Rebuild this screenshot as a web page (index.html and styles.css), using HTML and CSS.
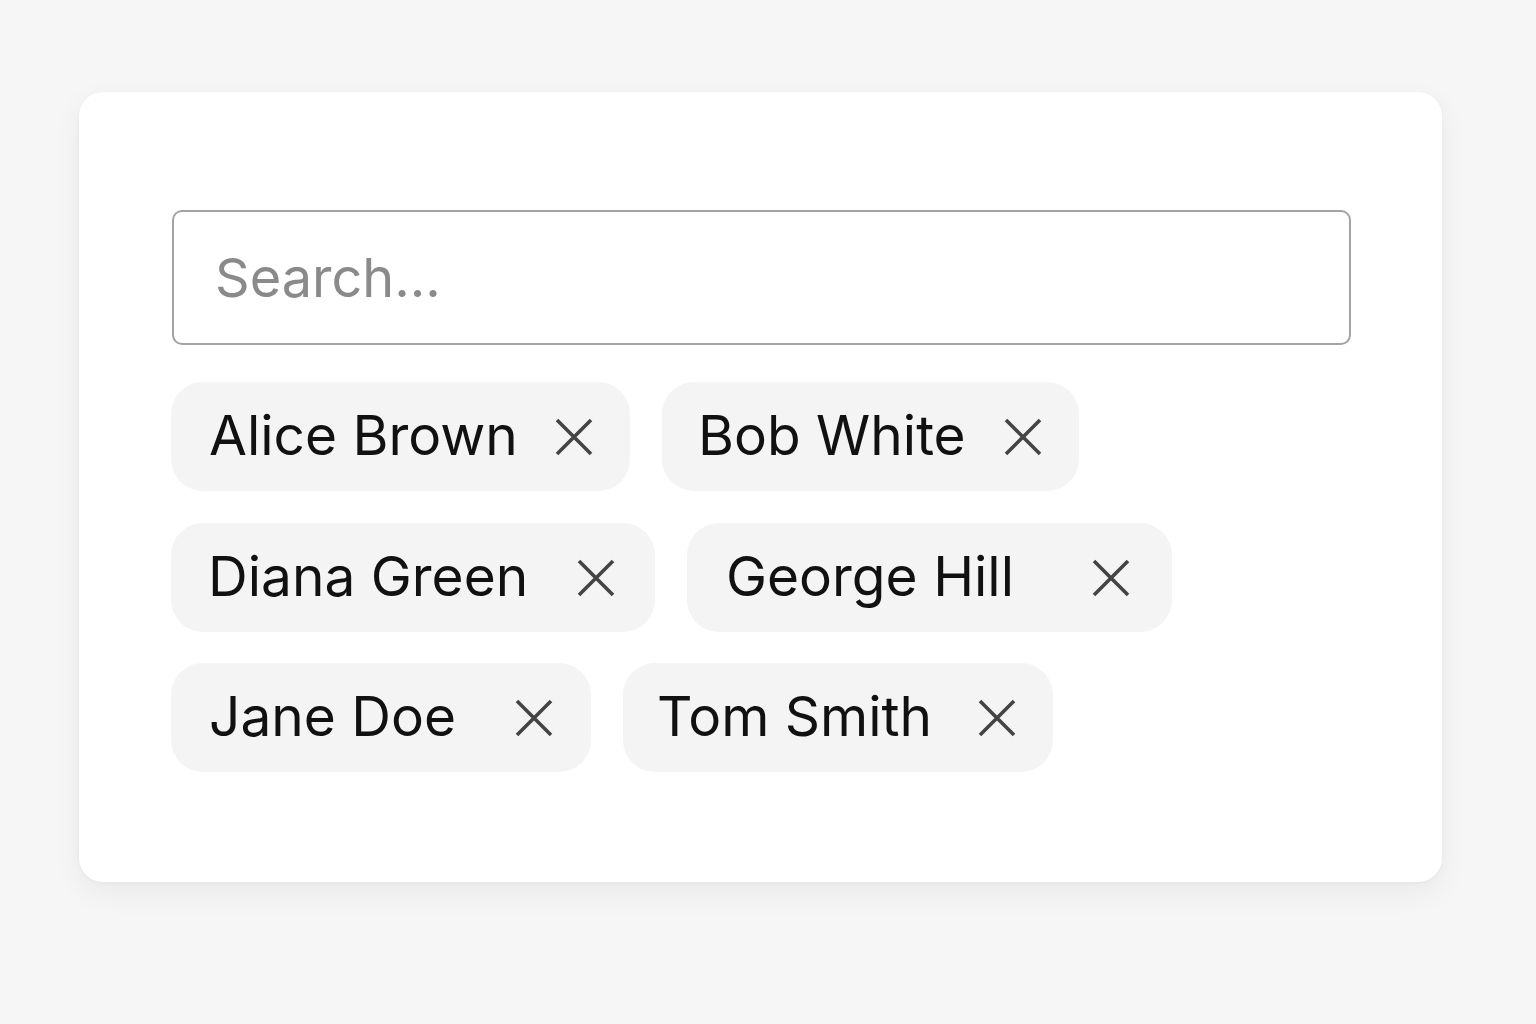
FILE: index.html
```html
<!DOCTYPE html>
<html lang="en">
<head>
<meta charset="utf-8">
<title>Tag search</title>
<link rel="stylesheet" href="styles.css">
</head>
<body>
<main class="card">
  <div class="search">
    <input class="search-input" type="text" placeholder="Search...">
  </div>
  <ul class="chips">
    <li class="chip chip--alice"><span class="chip-label">Alice Brown</span><svg class="chip-x" viewBox="0 0 38 38"><path d="M2 2L36 36M36 2L2 36"/></svg></li>
    <li class="chip chip--bob"><span class="chip-label">Bob White</span><svg class="chip-x" viewBox="0 0 38 38"><path d="M2 2L36 36M36 2L2 36"/></svg></li>
    <li class="chip chip--diana"><span class="chip-label">Diana Green</span><svg class="chip-x" viewBox="0 0 38 38"><path d="M2 2L36 36M36 2L2 36"/></svg></li>
    <li class="chip chip--george"><span class="chip-label">George Hill</span><svg class="chip-x" viewBox="0 0 38 38"><path d="M2 2L36 36M36 2L2 36"/></svg></li>
    <li class="chip chip--jane"><span class="chip-label">Jane Doe</span><svg class="chip-x" viewBox="0 0 38 38"><path d="M2 2L36 36M36 2L2 36"/></svg></li>
    <li class="chip chip--tom"><span class="chip-label">Tom Smith</span><svg class="chip-x" viewBox="0 0 38 38"><path d="M2 2L36 36M36 2L2 36"/></svg></li>
  </ul>
</main>
</body>
</html>
```
FILE: styles.css
```css
html, body {
  margin: 0;
  padding: 0;
}
body {
  background: #f6f6f6;
  font-family: Inter, "Noto Sans", sans-serif;
  width: 1536px;
  height: 1024px;
  padding-top: 92px;
  box-sizing: border-box;
}
.card {
  margin-left: 79px;
  width: 1363px;
  height: 790px;
  box-sizing: border-box;
  background: #ffffff;
  border-radius: 24px;
  box-shadow: 0 10px 30px rgba(0, 0, 0, 0.06), 0 1px 4px rgba(0, 0, 0, 0.03);
  padding: 118px 91px 0 93px;
}
.search-input {
  display: block;
  width: 1179px;
  height: 135px;
  box-sizing: border-box;
  border: 2px solid #a3a3a3;
  border-radius: 10px;
  padding: 0 0 0 41px;
  font-family: Inter, "Noto Sans", sans-serif;
  font-size: 54px;
  color: #111;
  background: #fff;
  outline: none;
}
.search-input::placeholder {
  color: #8a8a8a;
}
.chips {
  list-style: none;
  margin: 37px 0 0 -1px;
  padding: 0;
  display: flex;
  flex-wrap: wrap;
  column-gap: 32px;
  row-gap: 32px;
  width: 1180px;
}
.chip {
  height: 109px;
  box-sizing: border-box;
  background: #f4f4f4;
  border-radius: 32px;
  display: flex;
  align-items: center;
  justify-content: space-between;
  padding: 0 37px 0 38px;
  font-size: 55px;
  color: #111;
}
.chip-label {
  line-height: 1;
  padding-bottom: 2px;
}
.chip-x {
  width: 38px;
  height: 38px;
  flex: none;
  stroke: #444;
  stroke-width: 3.6;
  fill: none;
}
.chip--alice { width: 459px; }
.chip--bob { width: 417px; padding-left: 36px; }
.chip--diana { width: 484px; padding-left: 37px; padding-right: 40px; }
.chip--george { width: 485px; padding-left: 39px; padding-right: 42px; }
.chip--jane { width: 420px; padding-right: 38px; }
.chip--tom { width: 430px; padding-left: 34px; }
.chips > .chip:nth-child(n+5) { margin-top: -1px; }
```
